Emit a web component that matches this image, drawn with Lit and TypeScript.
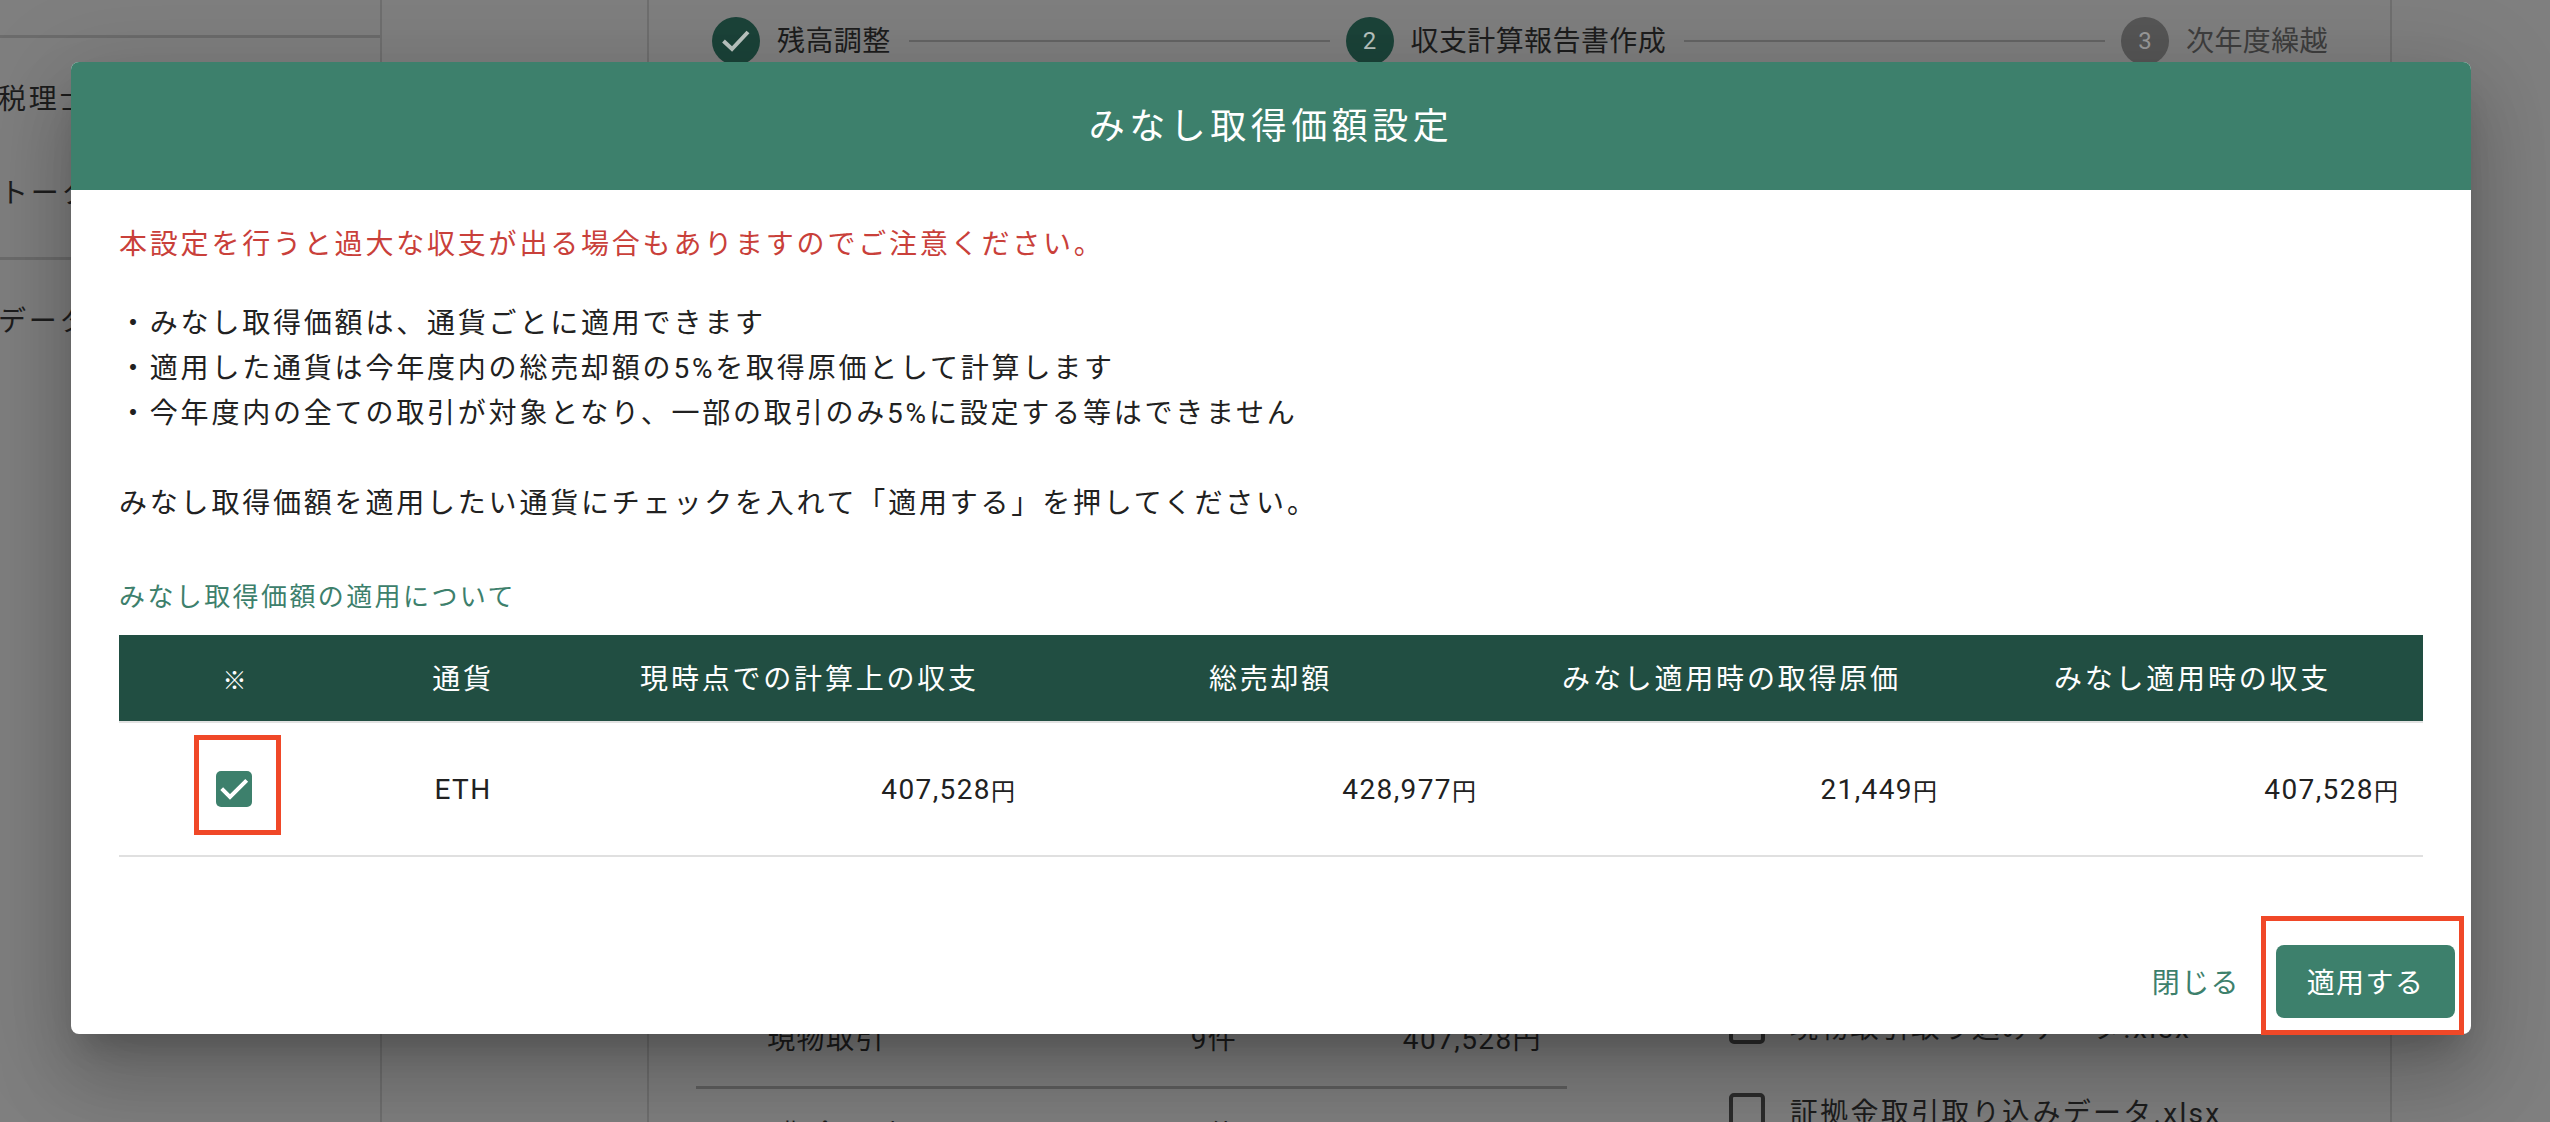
import { LitElement, html, css } from "lit";
import { customElement } from "lit/decorators.js";

@customElement("app-root")
export class AppRoot extends LitElement {
  static styles = css`
    :host {
      display: block;
      position: relative;
      width: 2550px;
      height: 1122px;
      overflow: hidden;
      font-family: Roboto, "Noto Sans CJK JP", sans-serif;
      font-size: 28px;
      color: #212121;
      background: #7f7f7f;
    }
    .page { display: flex; height: 1122px; color: #1d1d1d; }
    .sidebar {
      width: 382px; flex: none; box-sizing: border-box;
      border-right: 2px solid #6f6f6f;
      white-space: nowrap; overflow: hidden;
      letter-spacing: 2.8px;
    }
    .side-top { height: 35px; border-bottom: 3px solid #6c6c6c; }
    .side-item { line-height: 44px; padding-top: 40px; margin-left: -2px; }
    .side-item.second { padding-top: 50px; padding-bottom: 41px; margin-left: 0; border-bottom: 3px solid #6c6c6c; }
    .side-item.third { padding-top: 40px; }
    .gutter { width: 267px; flex: none; box-sizing: border-box; border-right: 2px solid #6f6f6f; }
    .content {
      width: 1743px; flex: none; box-sizing: border-box;
      border-right: 2px solid #6f6f6f;
      padding: 17px 62px 0 63px;
    }
    .stepper { display: flex; align-items: center; height: 48px; }
    .circle {
      width: 48px; height: 48px; border-radius: 50%; flex: none;
      display: flex; align-items: center; justify-content: center;
      background: #1b4339; color: #b9c4c0; font-size: 24px;
    }
    .circle.off { background: #565656; color: #9a9a9a; }
    .circle svg { display: block; }
    .step-label { margin: 0 0 5px 17px; white-space: nowrap; letter-spacing: 0.4px; }
    .step-label.off { color: #3e3e3e; }
    .step-line { flex: 1; height: 2px; background: #656565; margin: 0 16px 0 18px; }
    .lower { display: flex; margin-top: 923px; margin-left: -16px; letter-spacing: 1.4px; }
    .sum { width: 871px; flex: none; }
    .sum-row { display: flex; align-items: center; height: 88px; box-sizing: border-box; }
    .sum-row.first { height: 101px; border-bottom: 3px solid #5f5f5f; }
    .sum-row .label { width: 260px; text-align: center; }
    .sum-row .count { width: 228px; margin-left: 144px; text-align: center; }
    .sum-row .value { flex: 1; text-align: right; padding-right: 25px; }
    .files { margin-left: 162px; margin-top: -5px; }
    .file { display: flex; align-items: center; height: 85px; white-space: nowrap; letter-spacing: 2.3px; }
    .file i {
      display: block; width: 36px; height: 36px; box-sizing: border-box;
      border: 4px solid #2c2c2c; border-radius: 5px; margin-right: 25px; flex: none;
    }

    .dialog {
      position: absolute;
      left: 71px; top: 62px; width: 2400px; height: 972px;
      display: flex; flex-direction: column;
      background: #fff; border-radius: 8px;
      box-shadow: 0 22px 30px -14px rgba(0,0,0,.2), 0 48px 76px 6px rgba(0,0,0,.14), 0 18px 92px 16px rgba(0,0,0,.12);
    }
    .head {
      height: 128px; flex: none; box-sizing: border-box; padding-bottom: 6px;
      display: flex; align-items: center; justify-content: center;
      background: #3d806c; color: #fff;
      border-radius: 8px 8px 0 0;
      font-size: 36px; letter-spacing: 4.5px;
    }
    .body { padding: 32px 48px 0; letter-spacing: 2.8px; line-height: 45px; }
    .warn { margin: 0 0 34px; color: #c9403a; }
    .note { margin: 0; }
    .about { margin: 50px 0 17px; font-size: 26px; letter-spacing: 2.4px; line-height: 42px; color: #3d806c; }
    .table { display: grid; grid-template-columns: 228px 232px repeat(4, 461px); letter-spacing: 1.4px; line-height: normal; }
    .th {
      height: 88px; box-sizing: border-box; padding-bottom: 3px; background: #214e42; color: #fff;
      display: flex; align-items: center; justify-content: center;
      border-bottom: 2px solid #e2e2e2; letter-spacing: 2.8px;
    }
    .th.mark { font-size: 24px; font-weight: 500; letter-spacing: 0; padding: 0 0 0 3px; }
    .td {
      height: 134px; box-sizing: border-box; border-bottom: 2px solid #e0e0e0;
      display: flex; align-items: center; position: relative;
    }
    .td.center { justify-content: center; }
    .td.num { justify-content: flex-end; padding-right: 25px; }
    .yen { font-size: 24px; letter-spacing: 0; }
    .check {
      width: 36px; height: 36px; border-radius: 5px; background: #3d806c;
      display: block; margin-left: 2px;
    }
    .mark-box {
      position: absolute; left: 75px; top: 12px; width: 87px; height: 100px;
      box-sizing: border-box; border: 5px solid #f04828;
    }
    .foot {
      margin-top: auto; flex: none;
      display: flex; justify-content: flex-end; align-items: center;
      padding: 0 16px 16px 0;
    }
    .close { color: #3d806c; margin: 0 36px 2px 0; letter-spacing: 1.4px; }
    .apply {
      width: 179px; height: 73px; box-sizing: border-box; padding-bottom: 2px; border-radius: 8px;
      background: #3d806c; color: #fff;
      display: flex; align-items: center; justify-content: center;
      letter-spacing: 1.4px;
    }
    .apply-box {
      position: absolute; left: 2190px; top: 854px; width: 203px; height: 119px;
      box-sizing: border-box; border: 5px solid #f04828;
    }
  `;

  render() {
    const checkSmall = html`<svg class="check" width="36" height="36" viewBox="0 0 36 36"><path d="M5.7 17.7 14 26 30.7 9.3" fill="none" stroke="#fff" stroke-width="4"/></svg>`;
    return html`
      <div class="page">
        <aside class="sidebar">
          <div class="side-top"></div>
          <div class="side-item">税理士</div>
          <div class="side-item second">トークン</div>
          <div class="side-item third">データ</div>
        </aside>
        <div class="gutter"></div>
        <main class="content">
          <div class="stepper">
            <span class="circle"><svg width="48" height="48" viewBox="0 0 48 48"><path d="M11.5 24 20 32 36 15" fill="none" stroke="#bcc6c2" stroke-width="4"/></svg></span>
            <span class="step-label">残高調整</span>
            <span class="step-line"></span>
            <span class="circle">2</span>
            <span class="step-label">収支計算報告書作成</span>
            <span class="step-line"></span>
            <span class="circle off">3</span>
            <span class="step-label off">次年度繰越</span>
          </div>
          <div class="lower">
            <div class="sum">
              <div class="sum-row first"><span class="label">現物取引</span><span class="count">9件</span><span class="value">407,528円</span></div>
              <div class="sum-row"><span class="label">証拠金取引</span><span class="count">0件</span><span class="value">0円</span></div>
            </div>
            <div class="files">
              <div class="file"><i></i>現物取引取り込みデータ.xlsx</div>
              <div class="file"><i></i>証拠金取引取り込みデータ.xlsx</div>
            </div>
          </div>
        </main>
      </div>

      <section class="dialog">
        <header class="head">みなし取得価額設定</header>
        <div class="body">
          <p class="warn">本設定を行うと過大な収支が出る場合もありますのでご注意ください。</p>
          <p class="note">・みなし取得価額は、通貨ごとに適用できます<br>・適用した通貨は今年度内の総売却額の5%を取得原価として計算します<br>・今年度内の全ての取引が対象となり、一部の取引のみ5%に設定する等はできません<br><br>みなし取得価額を適用したい通貨にチェックを入れて「適用する」を押してください。</p>
          <div class="about">みなし取得価額の適用について</div>
          <div class="table">
            <div class="th mark">※</div>
            <div class="th">通貨</div>
            <div class="th">現時点での計算上の収支</div>
            <div class="th">総売却額</div>
            <div class="th">みなし適用時の取得原価</div>
            <div class="th">みなし適用時の収支</div>
            <div class="td center">${checkSmall}<span class="mark-box"></span></div>
            <div class="td center">ETH</div>
            <div class="td num">407,528<span class="yen">円</span></div>
            <div class="td num">428,977<span class="yen">円</span></div>
            <div class="td num">21,449<span class="yen">円</span></div>
            <div class="td num">407,528<span class="yen">円</span></div>
          </div>
        </div>
        <footer class="foot">
          <span class="close">閉じる</span>
          <span class="apply">適用する</span>
        </footer>
        <span class="apply-box"></span>
      </section>
    `;
  }
}
